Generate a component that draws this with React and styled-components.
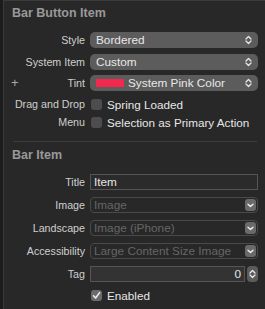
import React from 'react'
import styled, { createGlobalStyle } from 'styled-components'

const Global = createGlobalStyle`
  html, body { margin: 0; padding: 0; background: #282828; }
  body { font-family: "Liberation Sans", Arial, sans-serif; -webkit-font-smoothing: antialiased; }
`

const Page = styled.div`
  display: flex;
  width: 265px;
  height: 309px;
  overflow: hidden;
  background: #282828;
`

const Strip = styled.div`
  width: 3px;
  flex: none;
  background: #1c1c1c;
  border-right: 1px solid #3a3a3a;
`

const Panel = styled.div`
  flex: 1;
  display: flex;
  flex-direction: column;
  border-top: 1px solid #3a3a3a;
  padding-right: 7px;
`

const Header = styled.div`
  height: 16px;
  line-height: 16px;
  margin-top: ${p => p.$mt}px;
  padding-left: 8px;
  font-size: 12.5px;
  font-weight: bold;
  color: #999;
`

const Row = styled.div`
  display: grid;
  grid-template-columns: 81px 1fr;
  column-gap: 5px;
  align-items: center;
  height: ${p => p.$h || 16}px;
  margin-top: ${p => p.$mt}px;
  position: relative;
`

const Label = styled.div`
  text-align: right;
  font-size: 10.7px;
  color: #cfcfcf;
  white-space: nowrap;
`

const Plus = styled.span`
  position: absolute;
  left: 7px;
  top: 50%;
  transform: translateY(-52%);
  font-size: 13px;
  color: #a8a8a8;
`

const Popup = styled.div`
  display: flex;
  align-items: center;
  height: 16px;
  padding: 0 6px;
  border-radius: 5px;
  background: #5c5c5c;
  color: #e8e8e8;
  font-size: 11.8px;
  gap: 4px;
`

const PopupText = styled.span`
  flex: 1;
  white-space: nowrap;
`

const Swatch = styled.span`
  width: 28px;
  height: 8px;
  background: #f2284f;
`

const Combo = styled.div`
  display: flex;
  align-items: center;
  height: 16px;
  box-sizing: border-box;
  padding: 0 1px 0 3px;
  border: 1px solid #4a4a4a;
  border-radius: 4px;
  color: #666;
  font-size: 11.8px;
`

const ComboBtn = styled.span`
  width: 11px;
  height: 12px;
  border-radius: 3px;
  background: #6a6a6a;
  display: flex;
  align-items: center;
  justify-content: center;
`

const Field = styled.div`
  height: 16px;
  box-sizing: border-box;
  border: 1px solid #555;
  background: ${p => p.$bg || '#2b2b2b'};
  color: #e6e6e6;
  font-size: 11.8px;
  line-height: 14px;
  padding: 0 3px;
  text-align: ${p => p.$align || 'left'};
`

const FieldWrap = styled.div`
  display: flex;
  align-items: center;
  gap: 2px;
  & > ${Field} { flex: 1; }
`

const Stepper = styled.span`
  width: 11px;
  height: 16px;
  border-radius: 4px;
  background: #5c5c5c;
  display: flex;
  align-items: center;
  justify-content: center;
`

const Check = styled.div`
  display: flex;
  align-items: center;
  gap: 5px;
  font-size: 11.7px;
  color: #e6e6e6;
  white-space: nowrap;
  padding-left: 1px;
`

const Box = styled.span`
  width: 11px;
  height: 11px;
  border-radius: 3px;
  background: ${p => (p.$on ? '#6b6b6b' : '#4d4d4d')};
  display: flex;
  align-items: center;
  justify-content: center;
`

const Separator = styled.div`
  height: 1px;
  background: #3d3d3d;
  margin: ${p => p.$mt}px 1px 0 9px;
`

const UpDown = ({ color = '#e8e8e8' }) => (
  <svg width="7" height="10" viewBox="0 0 7 10">
    <path d="M1 4 L3.5 1.5 L6 4 M1 6 L3.5 8.5 L6 6" fill="none" stroke={color} strokeWidth="1.3" strokeLinecap="round" strokeLinejoin="round" />
  </svg>
)

const Down = () => (
  <svg width="7" height="5" viewBox="0 0 7 5">
    <path d="M1 1.2 L3.5 3.6 L6 1.2" fill="none" stroke="#eee" strokeWidth="1.4" strokeLinecap="round" strokeLinejoin="round" />
  </svg>
)

const Tick = () => (
  <svg width="9" height="9" viewBox="0 0 9 9">
    <path d="M1.5 4.8 L3.6 7 L7.6 1.6" fill="none" stroke="#f2f2f2" strokeWidth="1.5" strokeLinecap="round" strokeLinejoin="round" />
  </svg>
)

function PopupRow({ label, value, swatch, mt, plus }) {
  return (
    <Row $mt={mt}>
      {plus && <Plus>+</Plus>}
      <Label>{label}</Label>
      <Popup>
        {swatch && <Swatch />}
        <PopupText>{value}</PopupText>
        <UpDown />
      </Popup>
    </Row>
  )
}

function CheckRow({ label, text, on, mt, h }) {
  return (
    <Row $mt={mt} $h={h}>
      <Label>{label}</Label>
      <Check>
        <Box $on={on}>{on && <Tick />}</Box>
        {text}
      </Check>
    </Row>
  )
}

function ComboRow({ label, placeholder }) {
  return (
    <Row $mt={7}>
      <Label>{label}</Label>
      <Combo>
        <PopupText>{placeholder}</PopupText>
        <ComboBtn><Down /></ComboBtn>
      </Combo>
    </Row>
  )
}

export default function App() {
  return (
    <>
      <Global />
      <Page>
        <Strip />
        <Panel>
          <Header $mt={4}>Bar Button Item</Header>
          <PopupRow label="Style" value="Bordered" mt={11} />
          <PopupRow label="System Item" value="Custom" mt={6} />
          <PopupRow label="Tint" value="System Pink Color" swatch plus mt={5} />
          <CheckRow label="Drag and Drop" text="Spring Loaded" mt={5} />
          <CheckRow label="Menu" text="Selection as Primary Action" mt={2} />
          <Separator $mt={11} />
          <Header $mt={5}>Bar Item</Header>
          <Row $mt={11}>
            <Label>Title</Label>
            <Field>Item</Field>
          </Row>
          <ComboRow label="Image" placeholder="Image" />
          <ComboRow label="Landscape" placeholder="Image (iPhone)" />
          <ComboRow label="Accessibility" placeholder="Large Content Size Image" />
          <Row $mt={7}>
            <Label>Tag</Label>
            <FieldWrap>
              <Field $bg="#333" $align="right">0</Field>
              <Stepper><UpDown /></Stepper>
            </FieldWrap>
          </Row>
          <CheckRow label="" text="Enabled" on mt={7} h={12} />
        </Panel>
      </Page>
    </>
  )
}
